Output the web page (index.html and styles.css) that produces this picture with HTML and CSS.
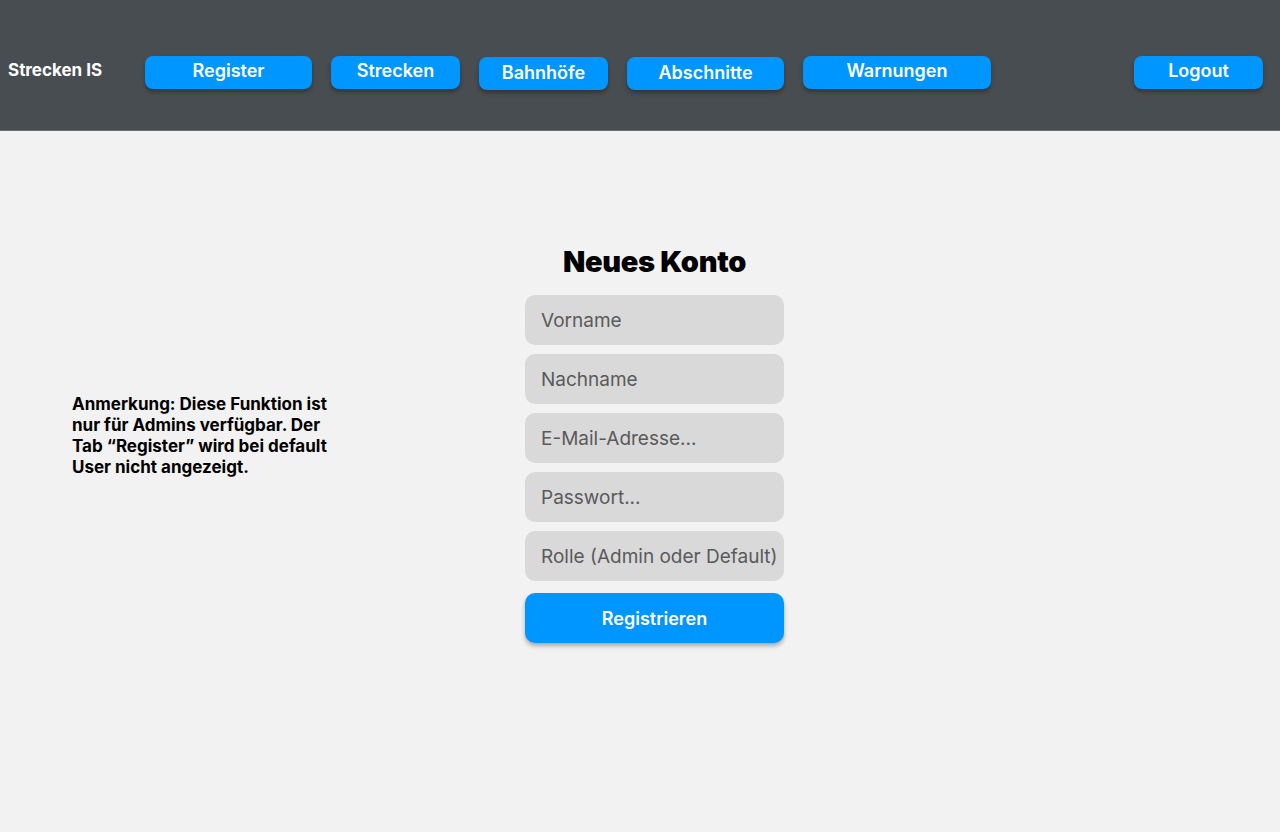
FILE: index.html
```html
<!DOCTYPE html>
<html lang="de">
<head>
<meta charset="utf-8">
<title>Strecken IS – Neues Konto</title>
<link rel="stylesheet" href="styles.css">
</head>
<body>
<header class="topbar">
  <div class="brand">Strecken IS</div>
  <nav class="nav">
    <button class="nav-btn w-register">Register</button>
    <button class="nav-btn w-strecken">Strecken</button>
    <button class="nav-btn w-bahnhoefe low">Bahnhöfe</button>
    <button class="nav-btn w-abschnitte low">Abschnitte</button>
    <button class="nav-btn w-warnungen">Warnungen</button>
  </nav>
  <button class="nav-btn w-logout">Logout</button>
</header>
<main class="main">
  <p class="note">Anmerkung: Diese Funktion ist nur für Admins verfügbar. Der Tab “Register” wird bei default User nicht angezeigt.</p>
  <form class="form">
    <h1 class="title">Neues Konto</h1>
    <input class="field" type="text" placeholder="Vorname">
    <input class="field" type="text" placeholder="Nachname">
    <input class="field" type="email" placeholder="E-Mail-Adresse...">
    <input class="field" type="password" placeholder="Passwort...">
    <input class="field" type="text" placeholder="Rolle (Admin oder Default)">
    <button class="submit" type="button">Registrieren</button>
  </form>
</main>
</body>
</html>
```

FILE: styles.css
```css
* { box-sizing: border-box; }
html, body { margin: 0; padding: 0; }
body {
  background: #f2f2f2;
  font-family: Inter, "Noto Sans", sans-serif;
  color: #000;
  height: 832px;
  overflow: hidden;
}
.topbar {
  height: 131px;
  background: #484d52;
  border-bottom: 1px solid #6b6f73;
  display: flex;
  align-items: flex-start;
  padding: 56px 17px 0 8px;
}
.brand {
  color: #fff;
  font-weight: 700;
  font-size: 17px;
  line-height: 20px;
  width: 137px;
  margin-top: 4px;
}
.nav {
  display: flex;
  gap: 19px;
  align-items: flex-start;
}
.nav-btn {
  height: 33px;
  border: none;
  border-radius: 8px;
  background: #0096ff;
  color: #fff;
  font-family: Inter, sans-serif;
  font-size: 18px;
  font-weight: 600;
  line-height: 22px;
  padding: 0 0 4px;
  box-shadow: 0 3px 4px rgba(0, 0, 0, 0.3);
}
.nav-btn.low { margin-top: 1px; padding-bottom: 2px; }
.w-register { width: 167px; }
.w-strecken { width: 129px; }
.w-bahnhoefe { width: 129px; }
.w-abschnitte { width: 157px; }
.w-warnungen { width: 188px; }
.w-logout { width: 129px; margin-left: auto; }
.main {
  display: flex;
  align-items: flex-start;
  padding-left: 72px;
}
.note {
  width: 270px;
  margin: 263px 0 0;
  font-size: 17px;
  font-weight: 700;
  line-height: 21px;
}
.form {
  margin: 113px 0 0 183px;
  width: 259px;
  display: flex;
  flex-direction: column;
  gap: 9px;
}
.title {
  margin: 0 0 6px;
  text-align: center;
  font-size: 29px;
  font-weight: 900;
  line-height: 36px;
  letter-spacing: -0.3px;
  white-space: nowrap;
}
.field {
  height: 50px;
  border: none;
  border-radius: 10px;
  background: #d9d9d9;
  padding: 0 0 0 16px;
  font-family: Inter, sans-serif;
  font-size: 19px;
  color: #333;
  outline: none;
}
.field::placeholder { color: #5a5a5a; }
.submit {
  margin-top: 3px;
  height: 50px;
  border: none;
  border-radius: 10px;
  background: #0096ff;
  color: #fff;
  font-family: Inter, sans-serif;
  font-size: 18px;
  font-weight: 600;
  box-shadow: 0 3px 4px rgba(0, 0, 0, 0.3);
}
```
